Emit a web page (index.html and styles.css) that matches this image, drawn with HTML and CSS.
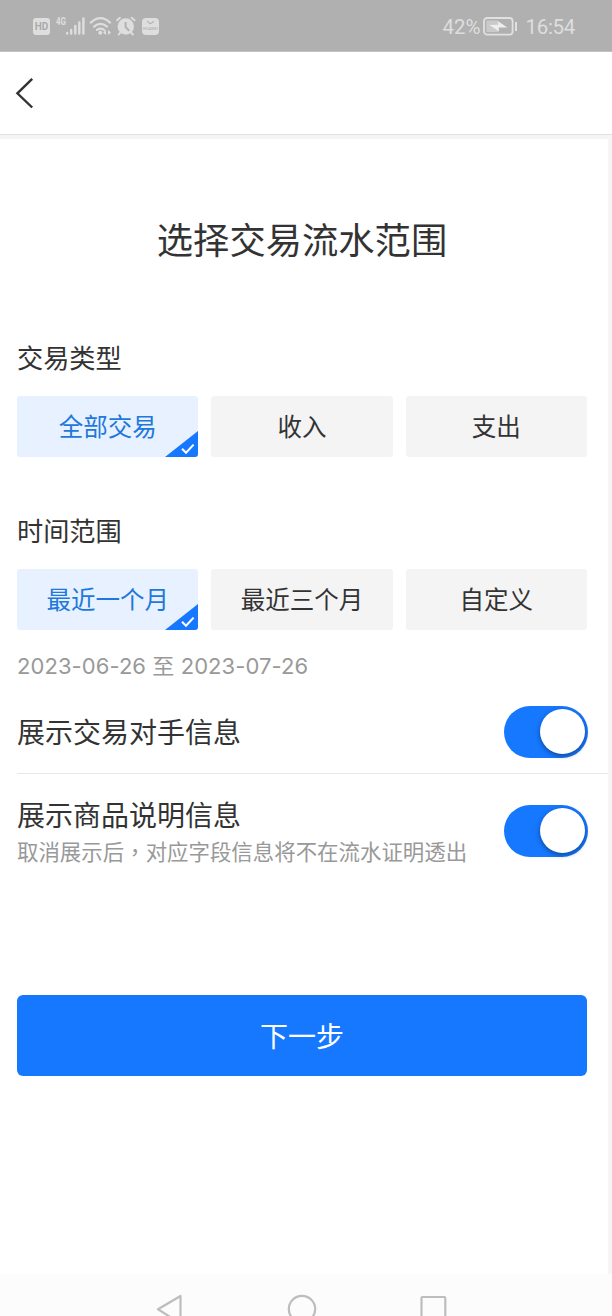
FILE: index.html
```html
<!DOCTYPE html>
<html lang="zh-CN">
<head>
  <meta charset="UTF-8" />
  <meta name="viewport" content="width=device-width, initial-scale=1.0"/>
  <title>选择交易流水范围</title>
  <link rel="stylesheet" href="styles.css">
</head>
<body>

  <div class="status-bar">
    <svg class="status-icons" width="130" height="24" viewBox="0 0 130 24">
      <!-- HD -->
      <rect x="1" y="4" width="17" height="17" rx="3" fill="#dedede"/>
      <text x="9.5" y="16.3" class="hd-text" text-anchor="middle">HD</text>
      <!-- 信号 -->
      <text x="24" y="11" class="net-text" textLength="10" lengthAdjust="spacingAndGlyphs">4G</text>
      <g stroke="#dedede" stroke-width="2.4" stroke-linecap="round">
        <path d="M35.2 19v.5M39.2 16v3.5M43.3 12v7.5M47.3 8.5v11M51.4 4.5v15"/>
      </g>
      <!-- WiFi -->
      <g fill="none" stroke="#dedede" stroke-width="2.2" stroke-linecap="round">
        <path d="M58.8 8.6Q68.5-.2 78 8.6M62 12.6Q68.5 7 75 12.6M65 15.9Q68.5 13.4 72 15.9"/>
      </g>
      <circle cx="68.3" cy="18.8" r="2" fill="#dedede"/>
      <path d="M71 18.5l3-2.6v5.2zM79 18.5l-3-2.6v5.2z" fill="#dedede"/>
      <!-- 闹钟 -->
      <circle cx="93.8" cy="12.5" r="8.2" fill="#dedede"/>
      <path d="M85 6.3l3-2.6M102.6 6.3l-3-2.6M88.6 18.5l-2 2M99 18.5l2 2" stroke="#dedede" stroke-width="1.8" stroke-linecap="round"/>
      <path d="M93.6 8v5l3.6 3.8" fill="none" stroke="#b0b0b0" stroke-width="1.9"/>
      <!-- 应用市场 -->
      <rect x="110" y="4" width="17" height="17" rx="4" fill="#dedede"/>
      <path d="M115.2 7q3.3 5 6.6 0" fill="none" stroke="#b0b0b0" stroke-width="1.3"/>
      <text x="118.5" y="15.5" class="shop-text" text-anchor="middle" textLength="15" lengthAdjust="spacingAndGlyphs">HUAWEI</text>
    </svg>
    <div class="status-right">
      <span class="battery-text">42%</span>
      <svg class="battery" width="36" height="20" viewBox="0 0 36 20">
        <rect x="1" y="1" width="28.6" height="16.6" rx="3.2" fill="none" stroke="#e0e0e0" stroke-width="1.8"/>
        <rect x="3.3" y="3.5" width="12" height="11.5" rx="1" fill="#cacaca"/>
        <path d="M6.5 8l8.8-.2-.6-3.8 9.6 6.4-8.6.2.4 3.8z" fill="#eee"/>
        <path d="M33 5v9" stroke="#e0e0e0" stroke-width="2"/>
      </svg>
      <span class="clock">16:54</span>
    </div>
  </div>

  <div class="nav-header">
    <svg width="20" height="32" viewBox="0 0 20 32">
      <path d="M18.2 1.8L3.4 16.3l14.8 14.2" fill="none" stroke="#333" stroke-width="2.4"/>
    </svg>
  </div>

  <div class="page">
    <div class="content">
      <h1>选择交易流水范围</h1>

      <h2 class="section-title">交易类型</h2>
      <div class="options">
        <div class="option active">全部交易
          <svg class="corner" width="33" height="26" viewBox="0 0 33 26"><path d="M33 0v26H0z" fill="#1677ff"/><path d="M17 17.8l4 4L28.6 13.6" fill="none" stroke="#fff" stroke-width="2.1"/></svg>
        </div>
        <div class="option">收入</div>
        <div class="option">支出</div>
      </div>

      <h2 class="section-title second">时间范围</h2>
      <div class="options">
        <div class="option active">最近一个月
          <svg class="corner" width="33" height="26" viewBox="0 0 33 26"><path d="M33 0v26H0z" fill="#1677ff"/><path d="M17 17.8l4 4L28.6 13.6" fill="none" stroke="#fff" stroke-width="2.1"/></svg>
        </div>
        <div class="option">最近三个月</div>
        <div class="option">自定义</div>
      </div>
      <p class="date-range">2023-06-26 至 2023-07-26</p>

      <div class="row">
        <div class="row-title">展示交易对手信息</div>
        <div class="switch"><div class="knob"></div></div>
      </div>
      <div class="row last">
        <div>
          <div class="row-title">展示商品说明信息</div>
          <p class="row-desc">取消展示后<span class="comma" lang="zh-TW">，</span>对应字段信息将不在流水证明透出</p>
        </div>
        <div class="switch"><div class="knob"></div></div>
      </div>

      <div class="next-btn">下一步</div>
    </div>
  </div>

  <!-- 系统导航键 -->
  <div class="system-nav">
    <svg width="612" height="42" viewBox="0 0 612 42" fill="none" stroke="#bdbdbd" stroke-width="2.2" stroke-linejoin="round">
      <path d="M180.5 22v27.5L158 35.3z"/>
      <circle cx="302" cy="35" r="13.2"/>
      <rect x="421.5" y="23" width="23.8" height="24" rx="1"/>
    </svg>
  </div>

</body>
</html>
```

FILE: styles.css
```css
/* --- 基本重置 --- */
* {
  box-sizing: border-box;
}
body {
  margin: 0;
  height: 1316px;
  display: flex;
  flex-direction: column;
  overflow: hidden;
  background-color: #fff;
  color: #333;
  font-family: "Noto Sans CJK SC", sans-serif;
}
h1, h2, p {
  margin: 0;
  font-weight: 400;
}
svg {
  display: block;
  flex-shrink: 0;
}

/* --- 状态栏 --- */
.status-bar {
  height: 52px;
  flex-shrink: 0;
  display: flex;
  justify-content: space-between;
  padding: 0 37px 0 32px;
  background-color: #b0b0b0;
  border-bottom: 1px solid #c2c2c2;
  color: #dedede;
  font-family: Roboto, sans-serif;
}
.status-icons {
  margin-top: 14px;
}
.hd-text {
  font-size: 10px;
  font-weight: 700;
  fill: #aaa;
}
.net-text {
  font-size: 11px;
  font-weight: 700;
  fill: #dedede;
}
.shop-text {
  font-size: 4px;
  fill: #aaa;
}
.status-right {
  display: flex;
  align-items: center;
  height: 54px;
  font-size: 20.5px;
}
.battery {
  margin: 0 6px 0 3px;
}
.clock {
  letter-spacing: -0.3px;
}

/* --- 顶部导航 --- */
.nav-header {
  height: 83px;
  flex-shrink: 0;
  padding: 25px 0 0 14px;
  border-bottom: 1px solid #e2e2e2;
}

/* --- 页面主体 --- */
.page {
  height: 1139px;
  flex-shrink: 0;
  border-top: 4px solid #f4f4f4;
  border-right: 4px solid #f5f5f5;
}
.content {
  padding: 72px 0 0 17px;
}
h1 {
  padding-right: 21px;
  font-size: 36.3px;
  line-height: 54px;
  text-align: center;
}
.section-title {
  margin: 74px 0 21px;
  font-size: 26.2px;
  line-height: 36px;
}
.section-title.second {
  margin-top: 55px;
}

/* --- 选项按钮 --- */
.options {
  display: grid;
  grid-template-columns: repeat(3, 1fr);
  gap: 13px;
  margin-right: 21px;
}
.option {
  position: relative;
  height: 61px;
  border-radius: 3px;
  overflow: hidden;
  background-color: #f4f4f4;
  font-size: 24.5px;
  line-height: 59px;
  text-align: center;
}
.option.active {
  background-color: #e7f1ff;
  color: #1f78dc;
}
.corner {
  position: absolute;
  right: 0;
  bottom: 0;
}
.date-range {
  margin-top: 20px;
  font-family: Inter, "Noto Sans CJK SC", sans-serif;
  font-size: 22px;
  line-height: 32px;
  letter-spacing: 0.07px;
  color: #999;
}

/* --- 开关行 --- */
.row {
  display: flex;
  justify-content: space-between;
  align-items: center;
  height: 84px;
  margin-top: 8px;
  padding-right: 20.5px;
  border-bottom: 1px solid #e8e8e8;
}
.row.last {
  height: 114px;
  margin-top: 0;
  border-bottom: none;
}
.row-title {
  padding-bottom: 2px;
  font-size: 28px;
  line-height: 38px;
}
.row-desc {
  font-size: 21.45px;
  line-height: 32px;
  color: #999;
}
.comma {
  font-family: "Noto Sans CJK TC", sans-serif;
}
.switch {
  width: 84px;
  height: 52px;
  padding: 3px;
  display: flex;
  justify-content: flex-end;
  border-radius: 26px;
  background-color: #1677ff;
}
.knob {
  width: 45px;
  height: 45px;
  border-radius: 50%;
  background-color: #fff;
  box-shadow: 0 2px 5px rgba(0, 0, 0, 0.4);
}

/* --- 下一步 --- */
.next-btn {
  height: 81px;
  margin: 107px 21px 0 0;
  border-radius: 6px;
  background-color: #1677ff;
  color: #fff;
  font-size: 28px;
  line-height: 80px;
  text-align: center;
}

/* --- 底部系统栏 --- */
.system-nav {
  height: 42px;
  flex-shrink: 0;
  background-color: #fcfcfc;
}
```
